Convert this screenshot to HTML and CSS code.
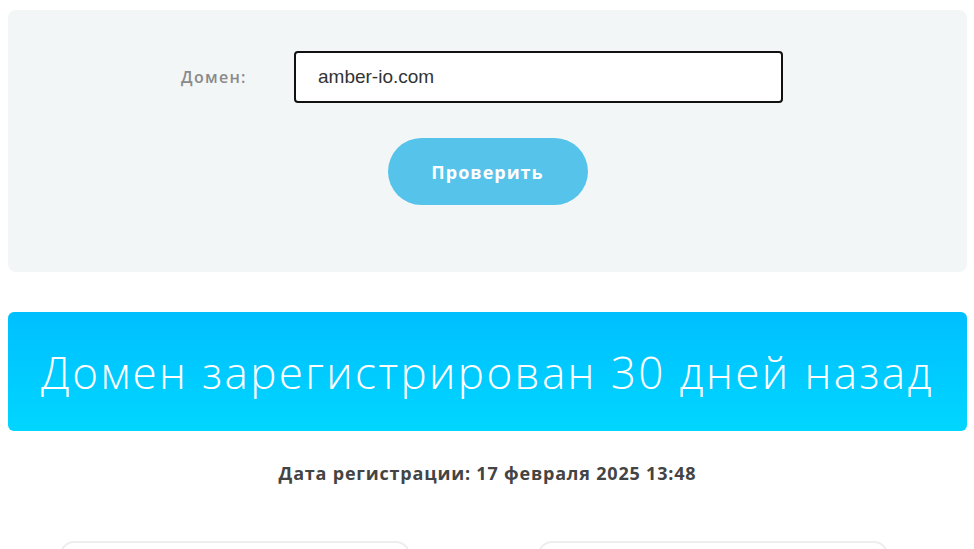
FILE: index.html
```html
<!DOCTYPE html>
<html lang="ru">
<head>
    <meta charset="UTF-8">
    <title>Проверка возраста домена</title>
    <link rel="stylesheet" href="styles.css">
</head>
<body>
    <main class="page">
        <form class="check-form" onsubmit="return false">
            <div class="form-row">
                <label class="form-label" for="domain">Домен:</label>
                <input class="form-input" type="text" id="domain" value="amber-io.com">
            </div>
            <button class="check-button" type="submit">Проверить</button>
        </form>

        <div class="result-banner">Домен зарегистрирован 30 дней назад</div>

        <p class="reg-date">Дата регистрации: 17 февраля 2025 13:48</p>

        <div class="cards">
            <div class="card"></div>
            <div class="card"></div>
        </div>
    </main>
</body>
</html>
```

FILE: styles.css
```css
body {
    margin: 0;
    background: #fff;
    font-family: "Open Sans", "Noto Sans", sans-serif;
    color: #444;
}

.page {
    padding: 10px 7px 0 8px;
}

.check-form {
    background-color: #f3f6f7;
    border-radius: 8px;
    height: 262px;
    box-sizing: border-box;
    padding-top: 41px;
    display: flex;
    flex-direction: column;
    align-items: center;
}

.form-row {
    display: flex;
    align-items: center;
    align-self: flex-start;
    padding-left: 173px;
}

.form-label {
    width: 113px;
    font-size: 16px;
    font-weight: 600;
    letter-spacing: 1.3px;
    color: #8a8a8a;
}

.form-input {
    width: 489px;
    height: 52px;
    box-sizing: border-box;
    border: 2px solid #111;
    border-radius: 4px;
    padding: 0 22px;
    font-family: "Liberation Sans", Arial, sans-serif;
    font-size: 19px;
    color: #333;
    background: #fff;
    outline: none;
}

.check-button {
    margin-top: 35px;
    width: 200px;
    height: 67px;
    border: none;
    border-radius: 34px;
    background-color: #55c3ea;
    color: #fff;
    font-family: "Open Sans", "Noto Sans", sans-serif;
    font-size: 18px;
    font-weight: 700;
    letter-spacing: 1px;
    cursor: pointer;
}

.result-banner {
    margin-top: 40px;
    height: 119px;
    border-radius: 6px;
    background: linear-gradient(to bottom, #00bfff, #00d6ff);
    color: #fff;
    font-size: 44px;
    font-weight: 300;
    letter-spacing: 2.4px;
    display: flex;
    align-items: center;
    justify-content: center;
}

.reg-date {
    margin: 30px 0 0;
    text-align: center;
    font-size: 18px;
    font-weight: 700;
    letter-spacing: 0.8px;
    color: #444;
}

.cards {
    display: flex;
    gap: 128px;
    padding-left: 52px;
    margin-top: 56px;
}

.card {
    width: 350px;
    height: 120px;
    border: 2px solid #eeeeee;
    border-radius: 14px;
    box-sizing: border-box;
}
```
